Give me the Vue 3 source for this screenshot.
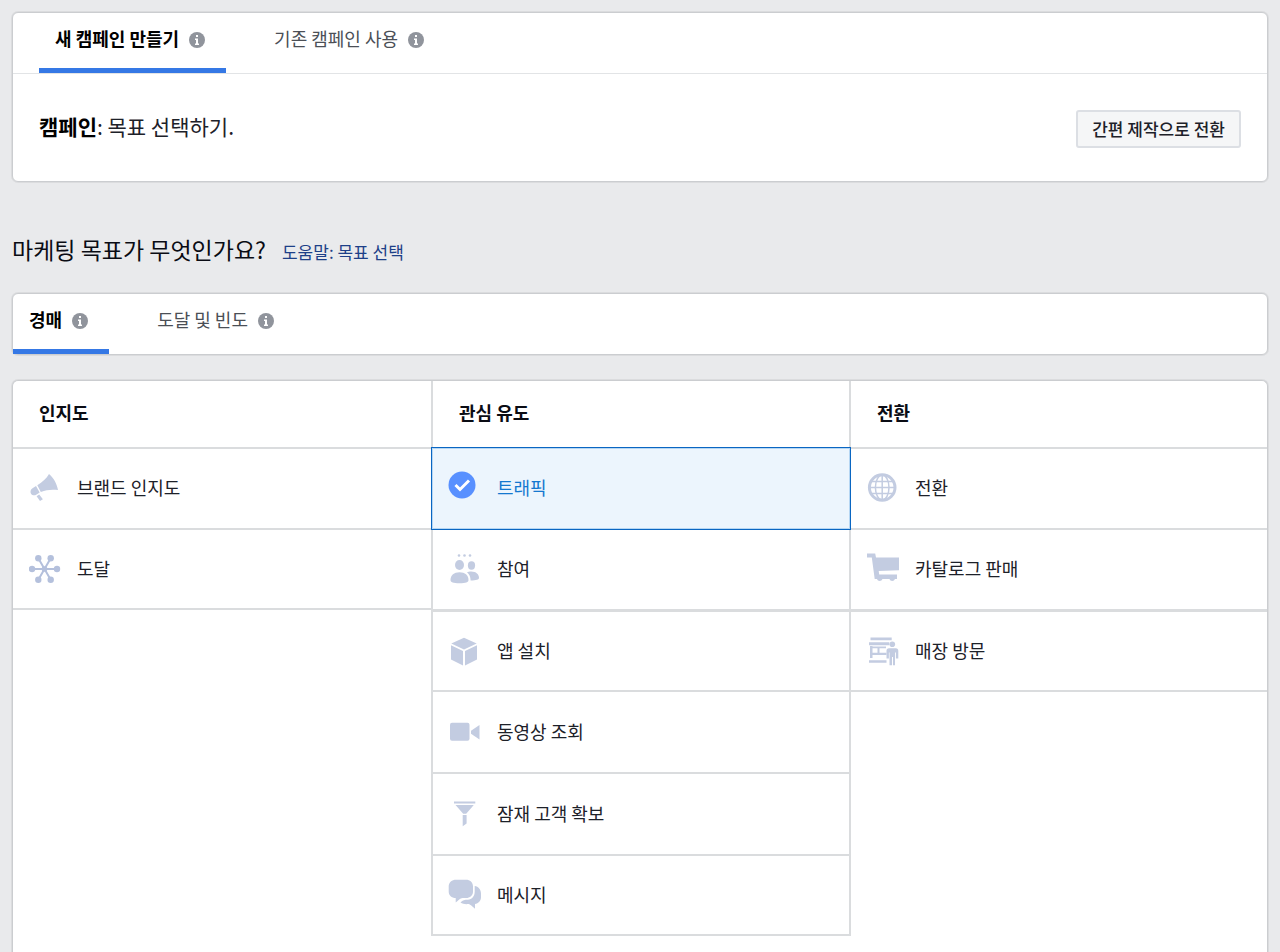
<template>
  <main class="page">
    <section class="card campaign">
      <nav class="tabs campaign-tabs">
        <button
          v-for="tab in campaignTabs"
          :key="tab"
          type="button"
          class="tab"
          :class="{ active: tab === campaignTab }"
          @click="campaignTab = tab"
        >
          {{ tab }}
          <svg class="info" viewBox="0 0 16 16" aria-hidden="true">
            <circle cx="8" cy="8" r="8" />
            <path d="M7 3h2v2H7zM6 6.500h3v5h1V13H6v-1.500h1V8H6z" />
          </svg>
        </button>
      </nav>
      <div class="campaign-body">
        <h1 class="campaign-title"><strong>캠페인</strong>: 목표 선택하기.</h1>
        <button type="button" class="switch-button">간편 제작으로 전환</button>
      </div>
    </section>

    <header class="question">
      <h2>마케팅 목표가 무엇인가요?</h2>
      <a href="#">도움말: 목표 선택</a>
    </header>

    <nav class="card tabs">
      <button
        v-for="tab in buyingTabs"
        :key="tab"
        type="button"
        class="tab"
        :class="{ active: tab === buyingTab }"
        @click="buyingTab = tab"
      >
        {{ tab }}
        <svg class="info" viewBox="0 0 16 16" aria-hidden="true">
          <circle cx="8" cy="8" r="8" />
          <path d="M7 3h2v2H7zM6 6.500h3v5h1V13H6v-1.500h1V8H6z" />
        </svg>
      </button>
    </nav>

    <section class="card objectives">
      <div v-for="column in columns" :key="column.title" class="column">
        <h3>{{ column.title }}</h3>
        <button
          v-for="item in column.items"
          :key="item.icon"
          type="button"
          class="objective"
          :class="{ selected: item.icon === selected }"
          :aria-pressed="item.icon === selected"
          @click="selected = item.icon"
        >
          <svg class="icon" viewBox="0 0 36 36" aria-hidden="true">
            <g v-if="item.icon === selected">
              <circle class="check-disc" cx="15" cy="15" r="13.500" />
              <path class="check-mark" d="M8.500 15l4.500 4.500 9-9" />
            </g>
            <g v-else-if="item.icon === 'awareness'" transform="translate(0 -1)">
              <path d="M20 5c4.500 3.500 8 10 9 16-6-.8-11.500-.3-17.200 2L8.300 16.200C13.500 13 17.500 9.500 20 5z" />
              <path d="M7 16.900l3.700 6.600-3.500 2.300c-1.900 1-4 .7-5.200-1.100-1.100-2-.4-4.200 1.500-5.400z" />
              <path d="M7.600 27.200l2.600-1.700 3.700 4.700-2.900 1.900z" />
            </g>
            <g v-else-if="item.icon === 'reach'" class="reach">
              <path class="thin" d="M3 18h25M9.300 7.300l12.400 21.400M21.700 7.300l-12.400 21.400" />
              <circle cx="15.500" cy="18" r="2.800" />
              <circle cx="3" cy="18" r="3.200" />
              <circle cx="28" cy="18" r="3.200" />
              <circle cx="9.300" cy="7.300" r="3.200" />
              <circle cx="21.700" cy="7.300" r="3.200" />
              <circle cx="9.300" cy="28.700" r="3.200" />
              <circle cx="21.700" cy="28.700" r="3.200" />
            </g>
            <g v-else-if="item.icon === 'traffic'">
              <path d="M7 4l20 14-9 2-5 9z" />
            </g>
            <g v-else-if="item.icon === 'engagement'">
              <circle cx="12" cy="4.500" r="1.300" />
              <circle cx="17.500" cy="4.500" r="1.300" />
              <circle cx="23" cy="4.500" r="1.300" />
              <ellipse cx="12.500" cy="14" rx="4.500" ry="5" />
              <ellipse cx="24.500" cy="14.500" rx="3.600" ry="4.200" />
              <path d="M3.500 29c0-5 3.500-7.800 9-7.800s9 2.800 9 7.800c0 2.200-2.600 3.300-9 3.300s-9-1.100-9-3.300z" />
              <path d="M20 21.200c1-.6 2.500-.8 4.200-.8 5 0 7.800 3 7.800 6.300 0 1.800-2.500 2.700-8.400 2.700-.1-3.400-1.100-6.200-3.600-8.200z" />
            </g>
            <g v-else-if="item.icon === 'app'">
              <path d="M17 4.700l12.700 5.800L17 16.600 4.300 10.500z" />
              <path d="M4 12.300l12 5.800v14.500L4 26.500zM18 18.100l12-5.800v14.200l-12 6.100z" />
            </g>
            <g v-else-if="item.icon === 'video'">
              <rect x="3" y="8.800" width="19.500" height="18" rx="2" />
              <path d="M32.500 11v14.500L24 19.800v-3z" />
            </g>
            <g v-else-if="item.icon === 'leads'">
              <path d="M7 5.500h21.300v2H7zM8.500 9h18.300l-7.600 8.700h-3zM15.700 18.900h3.900v8.600l-3.900 2.700z" />
            </g>
            <g v-else-if="item.icon === 'messages'">
              <path d="M9 2.700h10c4 0 7 2.700 7 6.800v5c0 4.100-3 6.500-7 6.500h-3.500c-2.500.2-4 2.300-6.800 4.500v-4.500c-4.100 0-7-2.400-7-6.500v-5c0-4.100 3.300-6.800 7.300-6.800z" />
              <path d="M27.700 9c3.700.6 6.300 3.500 6.300 7.500v3.700c0 3.600-2.500 6.300-6 6.700v4.800c-3-2-4.500-4.600-7-4.600-3 .2-5.500-.2-7.500-1.600 2.200-2.400 4.300-2.800 7.300-2.800 4.300-.4 6.900-3.800 6.900-8z" />
            </g>
            <g v-else-if="item.icon === 'conversion'">
              <circle class="globe-ring" cx="15.200" cy="17.500" r="12.800" />
              <path class="globe-line" d="M15.200 5v25M3 17.500h24.500M4.500 11.500h21.500M4.500 23.500h21.500" />
              <ellipse class="globe-line" cx="15.200" cy="17.500" rx="6.800" ry="12.500" />
            </g>
            <g v-else-if="item.icon === 'catalog'">
              <path d="M0 2.500h8.200l.8 4h23v12.800l-20.300.7.500 3.500H30v4.500h-2a3 3 0 0 1-5.600 0h-6.900a3 3 0 0 1-5.600 0H7.700L4.800 6.500H0z" />
            </g>
            <g v-else>
              <path d="M3.500 4.500h21.200v2.700H3.500zM2 9.200h20.300v3H2zM3 13h2.500v12H3zM5.500 19.800h14v2.200h-14zM10.500 14.500h2V22h-2zM5.500 13.500H19v1.800H5.500zM2 27.200h17.500v2.600H2z" />
              <circle cx="25.300" cy="11.300" r="2.800" />
              <path d="M22 15.200h6.800c1.700 0 2.500 1 2.500 2.600v7.700h-2.400v-6H28v12.800h-2V24h-1v8.300h-2.500V19.500h-.6v6h-2.400v-7.700c0-1.600.8-2.600 2.500-2.600z" />
            </g>
          </svg>
          {{ item.label }}
        </button>
      </div>
    </section>
  </main>
</template>

<script setup>
import { ref } from 'vue';

const campaignTabs = ['새 캠페인 만들기', '기존 캠페인 사용'];
const buyingTabs = ['경매', '도달 및 빈도'];

const campaignTab = ref(campaignTabs[0]);
const buyingTab = ref(buyingTabs[0]);
const selected = ref('traffic');

const columns = [
  {
    title: '인지도',
    items: [
      { icon: 'awareness', label: '브랜드 인지도' },
      { icon: 'reach', label: '도달' },
    ],
  },
  {
    title: '관심 유도',
    items: [
      { icon: 'traffic', label: '트래픽' },
      { icon: 'engagement', label: '참여' },
      { icon: 'app', label: '앱 설치' },
      { icon: 'video', label: '동영상 조회' },
      { icon: 'leads', label: '잠재 고객 확보' },
      { icon: 'messages', label: '메시지' },
    ],
  },
  {
    title: '전환',
    items: [
      { icon: 'conversion', label: '전환' },
      { icon: 'catalog', label: '카탈로그 판매' },
      { icon: 'store', label: '매장 방문' },
    ],
  },
];
</script>

<style>
body {
  background-color: #e9eaec;
}
</style>

<style scoped>
.page {
  box-sizing: border-box;
  display: flex;
  flex-direction: column;
  min-height: 100vh;
  padding: 12px 12px 0;
  color: #1d2129;
  font-family: "Noto Sans CJK KR", sans-serif;
  font-size: 18px;
  line-height: 26px;
}

button {
  margin: 0;
  padding: 0;
  border: 0;
  background: none;
  color: inherit;
  font: inherit;
  cursor: pointer;
}

h1,
h2,
h3 {
  margin: 0;
  font-weight: 400;
}

.card {
  border: 1px solid #cbcdd0;
  border-radius: 6px;
  background-color: #fff;
  box-shadow: 0 0 0 1px rgba(0, 0, 0, 0.06);
}

.tabs {
  display: flex;
  gap: 32px;
}

.campaign-tabs {
  padding: 0 26px;
  border-bottom: 1px solid #e2e4e6;
}

.tab {
  display: flex;
  align-items: center;
  gap: 10px;
  padding: 12px 21px 17px 16px;
  border-bottom: 5px solid transparent;
  color: #4b4f56;
}

.tab.active {
  border-bottom-color: #3578e5;
  color: #000;
  font-weight: 700;
}

.info {
  width: 16px;
  height: 16px;
  margin-top: 3px;
  fill: #90949c;
}

.info path {
  fill: #fff;
}

.campaign-body {
  display: flex;
  align-items: center;
  justify-content: space-between;
  padding: 36px 26px 33px;
}

.campaign-title {
  padding-bottom: 6px;
  font-size: 21px;
  line-height: 32px;
}

.campaign-title strong {
  color: #000;
}

.switch-button {
  padding: 4px 14px 5px;
  border: 2px solid #dcdfe4;
  border-radius: 3px;
  background-color: #f5f6f7;
  font-size: 17px;
  font-weight: 500;
  line-height: 25px;
}

.question {
  display: flex;
  align-items: baseline;
  gap: 16px;
  padding: 50px 0 27px;
}

.question h2 {
  color: #0a0c14;
  font-size: 23px;
  line-height: 34px;
}

.question a {
  color: #1d4088;
  font-size: 17px;
  text-decoration: none;
}

.objectives {
  display: grid;
  flex: 1;
  grid-template-columns: repeat(3, 1fr);
  align-items: start;
  margin-top: 25px;
  border-bottom: 0;
  border-radius: 6px 6px 0 0;
}

.column h3 {
  padding: 18px 26px 22px;
  border-bottom: 2px solid #dadcde;
  color: #0a0c14;
  font-size: 18px;
  font-weight: 700;
}

.objective {
  box-sizing: border-box;
  display: flex;
  align-items: center;
  gap: 12px;
  width: 100%;
  height: 82px;
  padding: 0 16px 3px;
  border-bottom: 2px solid #dadcde;
  text-align: left;
}

.objective:first-of-type {
  height: 81px;
}

.objective:nth-of-type(3),
.objective:last-child {
  height: 80px;
}

.column:not(:first-child) .objective:nth-of-type(2) {
  border-bottom-width: 3px;
}

.column:nth-child(2) {
  z-index: 1;
  margin-right: -2px;
  border: solid #dadcde;
  border-width: 0 2px;
}

.column:nth-child(2) .objective {
  gap: 14px;
  padding: 0 14px 3px;
}

.column:nth-child(3) {
  padding-left: 2px;
}

.column .objective.selected {
  width: calc(100% + 4px);
  height: 83px;
  margin: -2px -2px 0;
  padding: 0 15px 3px;
  border: 1px solid #0a66c2;
  background-color: #ecf5fd;
  box-shadow: inset 0 0 0 1px #b5d6f3;
  color: #1478cf;
}

.icon {
  flex: none;
  width: 36px;
  height: 36px;
  margin-top: 2px;
  fill: #c3cce1;
}

.reach {
  fill: #b4c0dc;
}

.thin {
  stroke: #b4c0dc;
  stroke-width: 2;
}

.globe-ring,
.globe-line {
  fill: none;
  stroke: #c3cce1;
  stroke-width: 3;
}

.globe-line {
  stroke-width: 1.5;
}

.check-disc {
  fill: #5890ff;
}

.check-mark {
  fill: none;
  stroke: #fff;
  stroke-width: 3;
}
</style>
